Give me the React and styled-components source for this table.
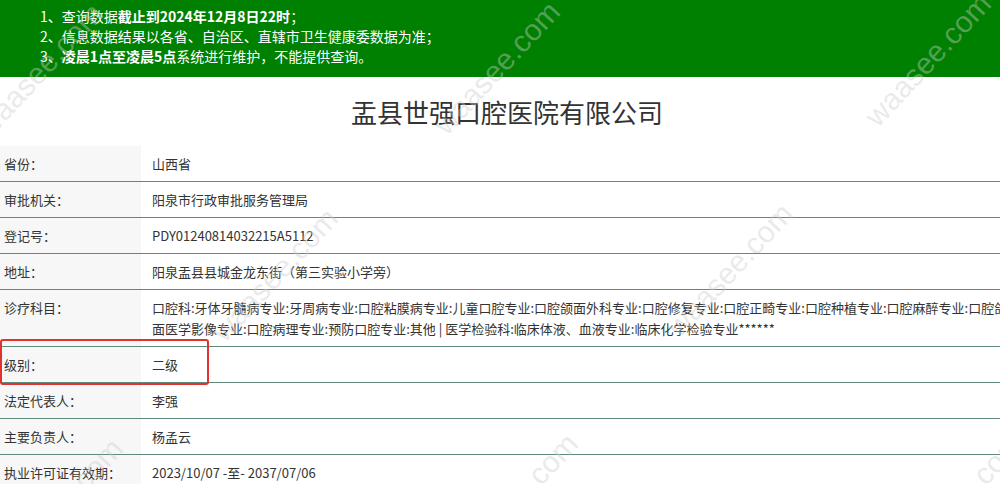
import React from 'react';
import styled, { createGlobalStyle } from 'styled-components';

const Global = createGlobalStyle`
  html, body {
    margin: 0;
    padding: 0;
    background: #fff;
    overflow: hidden;
  }
  body {
    font-family: "Noto Sans CJK SC", "Noto Sans", sans-serif;
    color: #333;
  }
`;

const Page = styled.div`
  position: relative;
  width: 1014px;
  min-height: 484px;
`;

const Notice = styled.div`
  background: #008000;
  color: #fff;
  font-size: 14px;
  line-height: 20px;
  padding: 6px 0 11px 40px;

  p {
    margin: 0;
  }
  b {
    font-weight: 700;
  }
`;

const Title = styled.h1`
  margin: 0;
  height: 69px;
  display: flex;
  align-items: center;
  justify-content: center;
  font-size: 26px;
  font-weight: 400;
  color: #333;
`;

const Table = styled.div`
  position: relative;
`;

const Row = styled.div`
  display: grid;
  grid-template-columns: 141px 1fr;
  border-bottom: 1px solid #5f8c79;
  font-size: 13px;
  line-height: 21px;
`;

const Label = styled.div`
  background: #f7f7f7;
  padding: 7px 4px;
`;

const Value = styled.div`
  padding: 7px 0 7px 11px;
`;

const Highlight = styled.div`
  position: absolute;
  left: 0;
  top: 193px;
  width: 205px;
  height: 42px;
  border: 2px solid #e3312f;
  border-radius: 3px;
  pointer-events: none;
`;

const Marks = styled.div`
  position: absolute;
  inset: 0;
  overflow: hidden;
  pointer-events: none;
`;

const Mark = styled.span`
  position: absolute;
  font-family: "Liberation Sans", Arial, sans-serif;
  font-size: 30px;
  color: rgba(205, 205, 205, 0.42);
  transform: translate(-50%, -50%) rotate(-47deg);
  white-space: nowrap;
`;

const rows = [
  ['省份：', '山西省'],
  ['审批机关：', '阳泉市行政审批服务管理局'],
  ['登记号：', 'PDY01240814032215A5112'],
  ['地址：', '阳泉盂县县城金龙东街（第三实验小学旁）'],
  [
    '诊疗科目：',
    '口腔科:牙体牙髓病专业:牙周病专业:口腔粘膜病专业:儿童口腔专业:口腔颌面外科专业:口腔修复专业:口腔正畸专业:口腔种植专业:口腔麻醉专业:口腔颌面医学影像专业:口腔病理专业:预防口腔专业:其他 | 医学检验科:临床体液、血液专业:临床化学检验专业******',
  ],
  ['级别：', '二级'],
  ['法定代表人：', '李强'],
  ['主要负责人：', '杨孟云'],
  ['执业许可证有效期：', '2023/10/07 -至- 2037/07/06'],
];

const marks = [
  [40, 70], [497, 68], [928, 60],
  [275, 275], [730, 270],
  [60, 505], [515, 500], [960, 500],
];

export default function App() {
  return (
    <Page>
      <Global />
      <Notice>
        <p>1、查询数据<b>截止到2024年12月8日22时</b>；</p>
        <p>2、信息数据结果以各省、自治区、直辖市卫生健康委数据为准；</p>
        <p>3、<b>凌晨1点至凌晨5点</b>系统进行维护，不能提供查询。</p>
      </Notice>
      <Title>盂县世强口腔医院有限公司</Title>
      <Table>
        {rows.map(([label, value]) => (
          <Row key={label}>
            <Label>{label}</Label>
            <Value>{value}</Value>
          </Row>
        ))}
        <Highlight />
      </Table>
      <Marks>
        {marks.map(([x, y]) => (
          <Mark key={x + '-' + y} style={{ left: x, top: y }}>waasee.com</Mark>
        ))}
      </Marks>
    </Page>
  );
}
